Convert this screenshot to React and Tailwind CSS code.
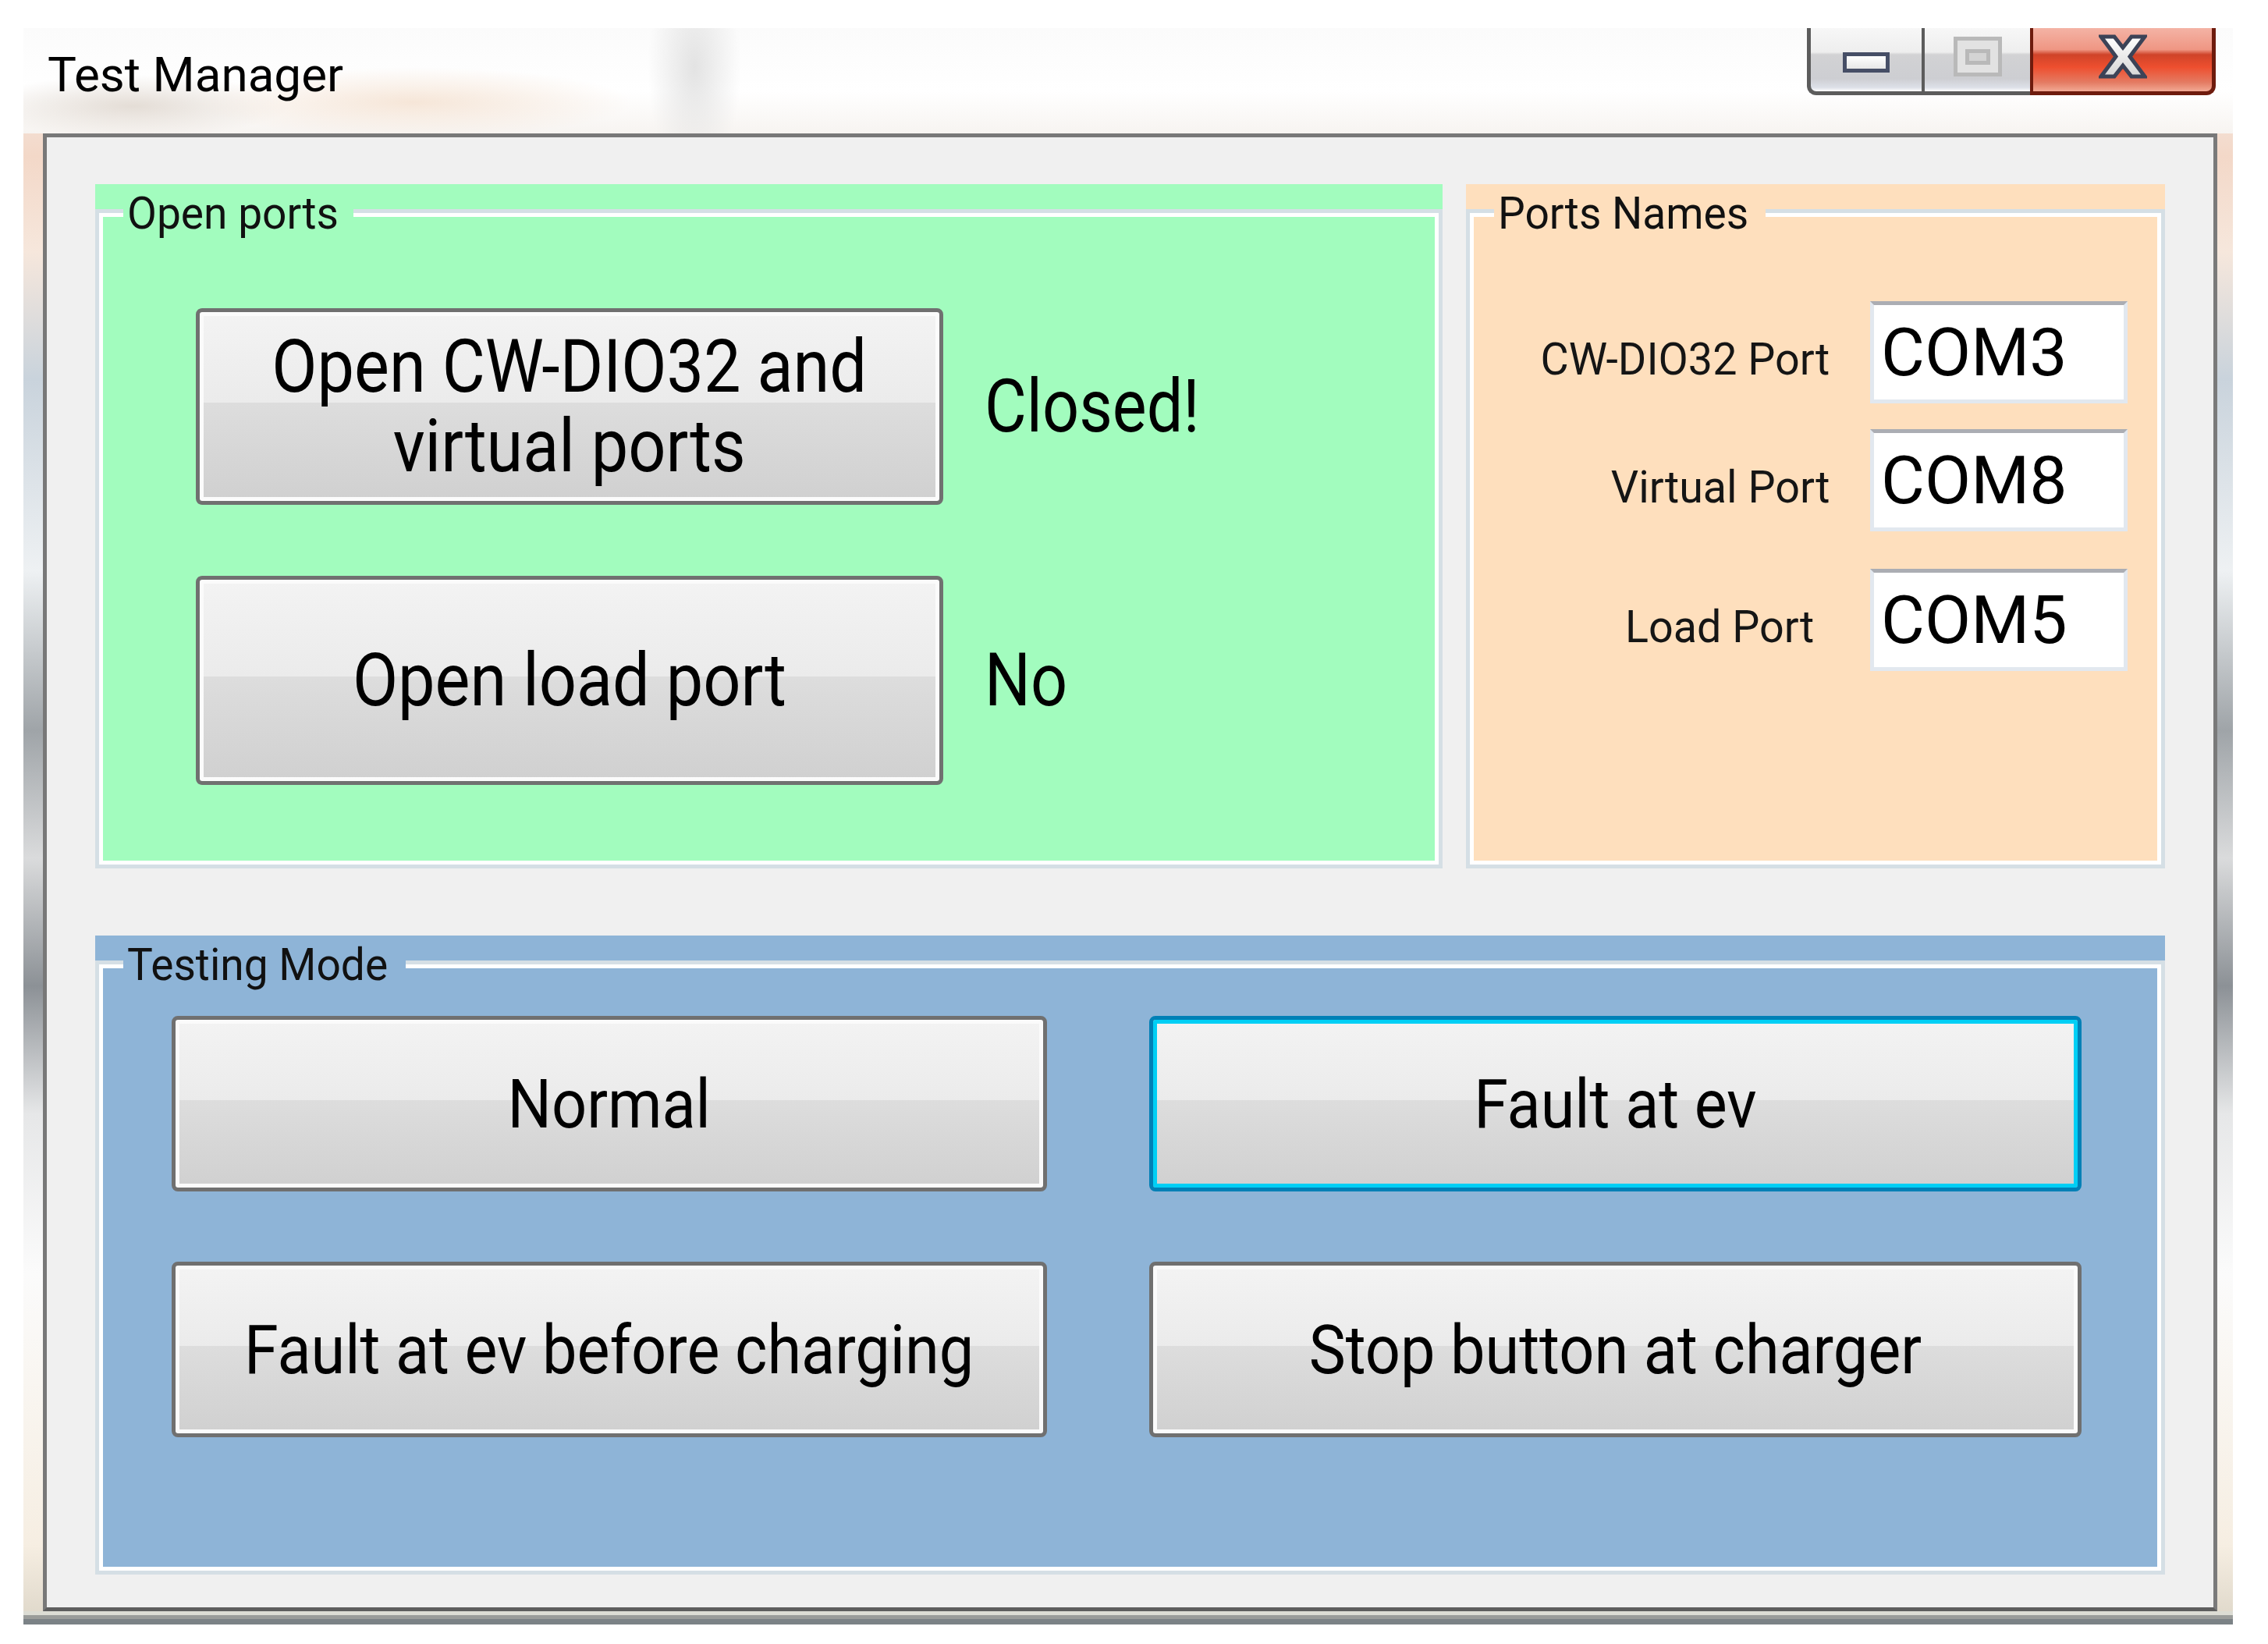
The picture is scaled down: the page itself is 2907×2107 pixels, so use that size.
import clsx from "clsx";

// Win7 "Test Manager" dialog, drawn at ~5x

function WinButton({ focused, className, children }) {
  return (
    <button
      className={clsx(
        "flex items-center justify-center rounded-[8px] border-[5px] text-black",
        "bg-[linear-gradient(to_bottom,#f3f3f3_0%,#ebebeb_48%,#dddddd_48%,#d0d0d0_100%)]",
        focused
          ? "border-[#0080b6] shadow-[inset_0_0_0_5px_#00cff5]"
          : "border-[#707070] shadow-[inset_0_0_0_5px_#fbfbfb]",
        className
      )}
    >
      <span className="inline-block scale-x-[0.9]">{children}</span>
    </button>
  );
}

function Group({ title, bg, className, bodyClass, children }) {
  return (
    <div className={clsx("relative flex flex-col pt-[32px]", bg, className)}>
      <div
        className={clsx(
          "flex-1 border-[5px] border-[#d5dfe5] shadow-[inset_0_0_0_5px_#ffffff]",
          bodyClass
        )}
      >
        {children}
      </div>
      <div className={clsx("absolute left-[36px] top-[8px] px-[5px] text-[58px] leading-[58px] text-[#111]", bg)}>
        <span className="inline-block origin-left scale-x-[0.95]">{title}</span>
      </div>
    </div>
  );
}

function PortField({ label, value, labelClass, className }) {
  return (
    <div className={clsx("flex items-center", className)}>
      <div className={clsx("w-[461px] pt-[16px] text-right text-[58px] leading-none text-[#151515]", labelClass)}>
        <span className="inline-block origin-right scale-x-[0.96]">{label}</span>
      </div>
      <div className="ml-[52px] flex h-[131px] w-[330px] items-center border-[5px] border-[#e2e8ef] border-t-[#abadb3] bg-white pl-[9px] text-[86px] leading-none text-black">
        {value}
      </div>
    </div>
  );
}

function CaptionButtons() {
  return (
    <div className="flex h-[86px] items-stretch">
      <div className="flex w-[147px] justify-center rounded-bl-[12px] border-b-[5px] border-l-[5px] border-[#5c5c5c] bg-[linear-gradient(to_bottom,#f7f7f7_0%,#eeeeee_38%,#d2d2d4_42%,#cdced2_80%,#dde0e8_94%,#ffffff_100%)] pt-[31px]">
        <div className="h-[26px] w-[60px] border-[5px] border-[#464e66] bg-[linear-gradient(to_bottom,#ffffff,#e6e6e6)]" />
      </div>
      <div className="flex w-[139px] justify-center border-b-[5px] border-l-[4px] border-[#5c5c5c] bg-[linear-gradient(to_bottom,#f7f7f7_0%,#eeeeee_38%,#d2d2d4_42%,#cdced2_80%,#dde0e8_94%,#ffffff_100%)] pt-[11px]">
        <div className="flex h-[51px] w-[62px] items-center justify-center border-[5px] border-[#b9b9b9] bg-[#e2e2e2]">
          <div className="h-[20px] w-[32px] border-[5px] border-[#b9b9b9] bg-[#d4d4d4]" />
        </div>
      </div>
      <div className="flex w-[238px] justify-center rounded-br-[12px] border-b-[5px] border-l-[4px] border-r-[5px] border-[#6e1b0d] bg-[linear-gradient(to_bottom,#f4b3a5_0%,#ef9683_34%,#cf4329_42%,#ee4f2f_62%,#e47b63_86%,#f2a994_100%)] pt-[8px]">
        <svg width="62" height="57" viewBox="-3 -3 62 57">
          <defs>
            <linearGradient id="xfill" x1="0" y1="0" x2="0" y2="1">
              <stop offset="0" stopColor="#ffffff" />
              <stop offset="1" stopColor="#d6d6d6" />
            </linearGradient>
          </defs>
          <polygon
            points="0,0 17,0 28,14 39,0 56,0 37,25.5 56,51 39,51 28,37 17,51 0,51 19,25.5"
            fill="url(#xfill)"
            stroke="#3c4357"
            strokeWidth="5"
            strokeLinejoin="miter"
          />
        </svg>
      </div>
    </div>
  );
}

export default function App() {
  return (
    <div className="relative h-[2107px] w-[2907px] overflow-hidden bg-white pl-[30px] pt-[36px] font-['Roboto','Noto_Sans',sans-serif]">
      <div className="flex h-[2046px] w-[2832px] flex-col bg-[linear-gradient(to_bottom,#f3f3f3_0%,#f3d8c8_8%,#f6e7dc_14%,#c9d3dc_22%,#eef1f3_34%,#9fa4a8_44%,#dadbdc_52%,#8c9196_60%,#e6e7e8_68%,#fbfbfb_78%,#f6eee2_95%,#ddd6c8_100%)]">
        {/* title bar */}
        <div className="flex h-[135px] justify-between bg-[radial-gradient(ellipse_60px_140px_at_860px_50px,#e3e3e3,transparent),radial-gradient(ellipse_280px_45px_at_500px_95px,#f6e6d8,transparent),radial-gradient(ellipse_200px_40px_at_140px_100px,#e4ddd6,transparent),linear-gradient(to_bottom,#fbfbfb,#ffffff_60%,#f7f4f1)]">
          <div className="pl-[31px] pt-[29px] text-[62px] leading-none text-black">Test Manager</div>
          <div className="mr-[22px]">
            <CaptionButtons />
          </div>
        </div>

        {/* client area */}
        <div className="ml-[25px] flex h-[1894px] w-[2787px] flex-col border-[5px] border-[#787878] border-b-[#5e5e5e] border-r-[#7a7a7a] bg-[#f0f0f0] pb-[42px] pl-[62px] pr-[62px] pt-[60px]">
          <div className="flex h-[877px] gap-[30px]">
            <Group title="Open ports" bg="bg-[#a2fcbe]" className="w-[1727px]" bodyClass="flex flex-col gap-[91px] pl-[124px] pt-[122px]">
              <div className="flex items-center">
                <WinButton className="h-[252px] w-[958px] text-[94px] leading-[102px]">
                  Open CW-DIO32 and
                  <br />
                  virtual ports
                </WinButton>
                <span className="ml-[53px] inline-block origin-left scale-x-[0.88] text-[94px] leading-none text-black">Closed!</span>
              </div>
              <div className="flex items-center">
                <WinButton className="h-[268px] w-[958px] text-[94px] leading-none">Open load port</WinButton>
                <span className="ml-[53px] inline-block origin-left scale-x-[0.88] text-[94px] leading-none text-black">No</span>
              </div>
            </Group>

            <Group title="Ports Names" bg="bg-[#fedfbd]" className="w-[896px]" bodyClass="flex flex-col pt-[113px]">
              <PortField label="CW-DIO32 Port" value="COM3" />
              <PortField label="Virtual Port" value="COM8" className="mt-[33px]" />
              <PortField label="Load Port" value="COM5" labelClass="pr-[20px]" className="mt-[48px]" />
            </Group>
          </div>

          <Group title="Testing Mode" bg="bg-[#8eb4d7]" className="mt-[86px] h-[819px]" bodyClass="grid grid-cols-[1122px_1195px] content-start gap-x-[131px] gap-y-[90px] pl-[93px] pt-[66px]">
            <WinButton className="h-[225px] text-[88px] leading-none">Normal</WinButton>
            <WinButton focused className="h-[225px] text-[88px] leading-none">Fault at ev</WinButton>
            <WinButton className="h-[225px] text-[88px] leading-none">Fault at ev before charging</WinButton>
            <WinButton className="h-[225px] text-[88px] leading-none">Stop button at charger</WinButton>
          </Group>
        </div>

        {/* bottom edge of the glass frame */}
        <div className="h-[17px] bg-[linear-gradient(to_bottom,#dcdcd4_0%,#dcdcd4_30%,#9a9c9a_30%,#9a9c9a_58%,#7b8286_58%,#7b8286_100%)]" />
      </div>
    </div>
  );
}
